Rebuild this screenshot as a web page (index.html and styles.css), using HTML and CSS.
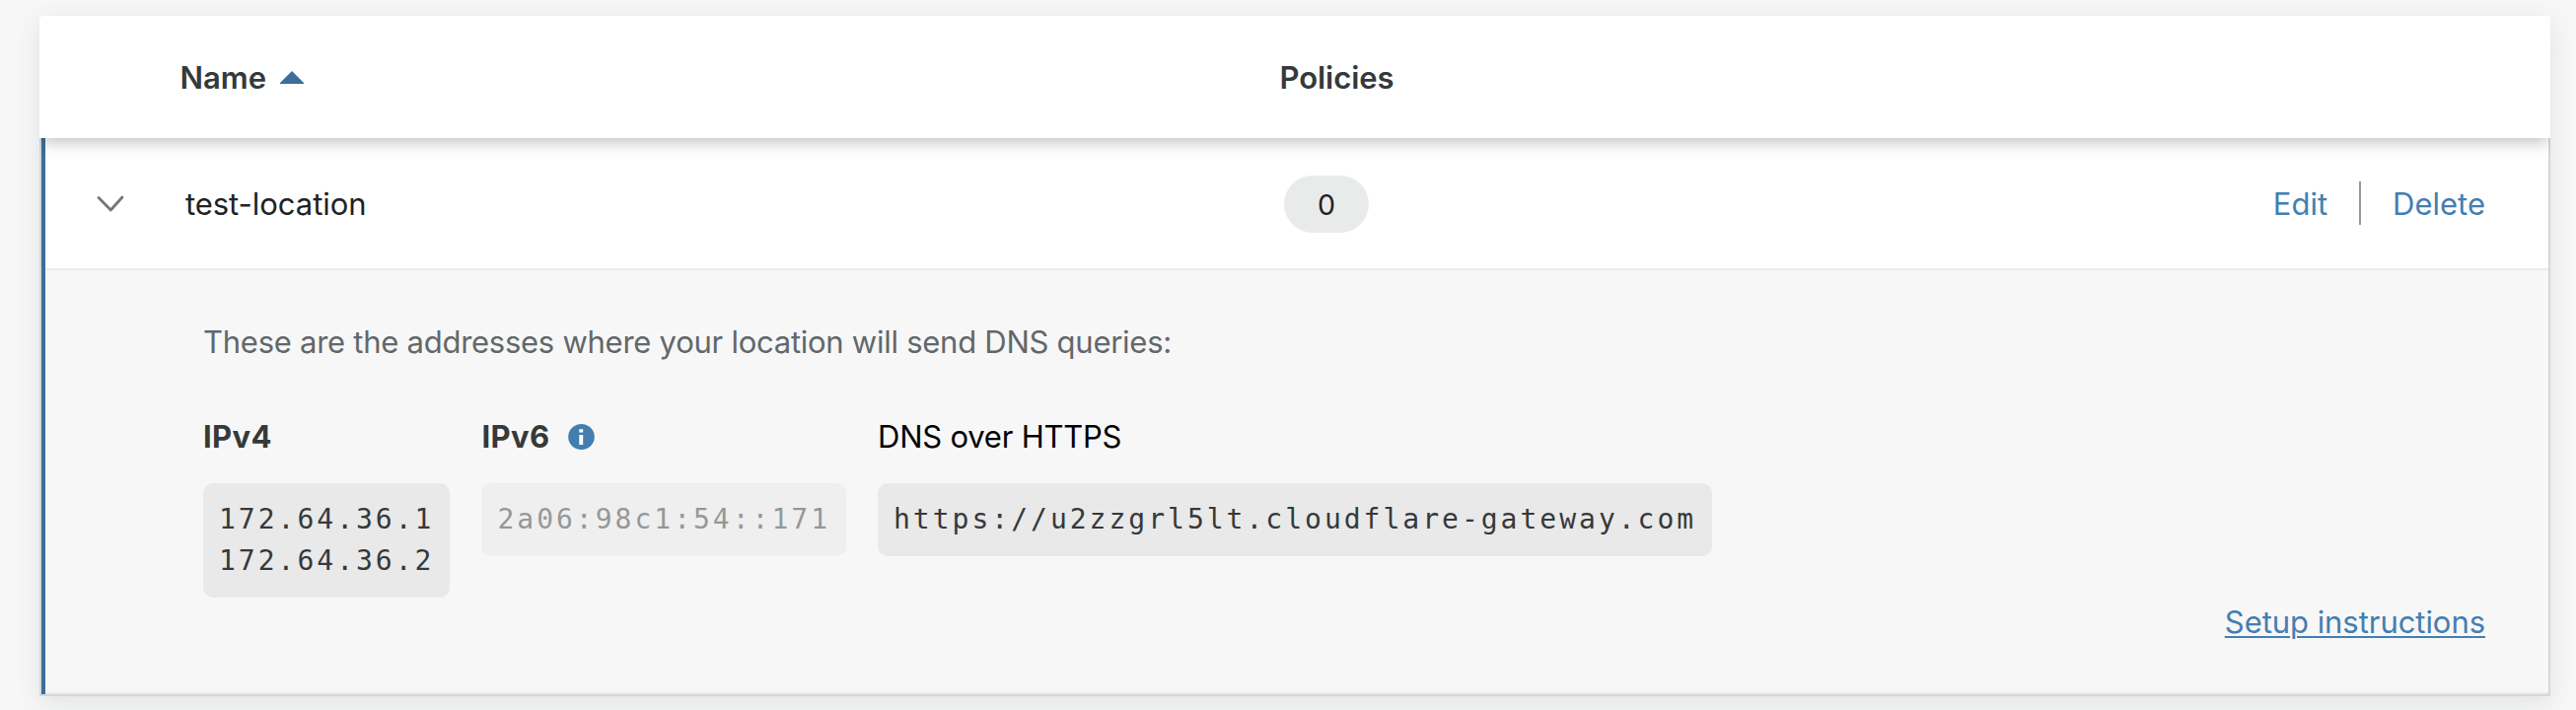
FILE: index.html
```html
<!DOCTYPE html>
<html lang="en">
<head>
<meta charset="utf-8">
<title>Locations</title>
<link rel="stylesheet" href="styles.css">
</head>
<body>
<main class="card">
  <header class="head">
    <div class="col-name head-label"><span class="t-name">Name</span><svg class="sort" width="24" height="13" viewBox="0 0 24 13"><path d="M12 0L24 12V13H0V12Z"/></svg></div>
    <div class="head-label t-policies">Policies</div>
  </header>
  <section class="body">
    <div class="row">
      <svg class="chevron" width="28" height="18" viewBox="0 0 28 18"><path d="M2 2.5L14.3 15L26 2"/></svg>
      <div class="location">test-location</div>
      <div class="badge">0</div>
      <nav class="actions"><a class="t-edit">Edit</a><span class="divider"></span><a class="t-delete">Delete</a></nav>
    </div>
    <div class="details">
      <p class="intro">These are the addresses where your location will send DNS queries:</p>
      <div class="addresses">
        <div class="address">
          <h3 class="label">IPv4</h3>
          <code class="code">172.64.36.1<br>172.64.36.2</code>
        </div>
        <div class="address">
          <h3 class="label">IPv6<svg class="info" width="27" height="26" viewBox="0 0 27 26"><ellipse cx="13.5" cy="13" rx="13.3" ry="13"/><path d="M11.3 5.2h3.9v3.2h-3.9zM11.3 10.9h3.9v10.2h-3.9z"/></svg></h3>
          <code class="code code-muted">2a06:98c1:54::171</code>
        </div>
        <div class="address">
          <h3 class="label label-plain">DNS over HTTPS</h3>
          <code class="code">https://u2zzgrl5lt.cloudflare-gateway.com</code>
        </div>
      </div>
      <a class="setup">Setup instructions</a>
    </div>
  </section>
</main>
</body>
</html>
```
FILE: styles.css
```css
* { box-sizing: border-box; }
body {
  margin: 0;
  padding: 16px 26px 14px 40px;
  height: 720px;
  overflow: hidden;
  background: #f7f7f7;
  font-family: Inter, "Liberation Sans", sans-serif;
  font-size: 31px;
  line-height: 48px;
  color: #222;
}
.card {
  height: 690px;
  border-radius: 4px 4px 0 0;
  box-shadow: 0 6px 26px rgba(60, 75, 80, 0.12);
}
.head {
  position: relative;
  display: grid;
  grid-template-columns: 1115px 1fr;
  align-items: center;
  height: 124px;
  padding: 2px 0 0 142.5px;
  background: #fff;
  border-radius: 4px 4px 0 0;
  box-shadow: 0 6px 16px -2px rgba(0, 0, 0, 0.25);
  clip-path: inset(0 0 -30px 0);
}
.head-label { font-weight: 600; color: #36393a; }
.col-name { display: flex; align-items: center; gap: 14px; }
.t-name { letter-spacing: 0; }
.t-policies { letter-spacing: -0.05px; }
.sort { margin-bottom: 2px; fill: #3b6e9a; }
.body {
  height: 566px;
  border: 2px solid #d5d7d8;
  border-top: 0;
  background: linear-gradient(#3b6e9a, #3b6e9a) left / 4px 100% no-repeat;
  padding-left: 4px;
}
.row {
  display: flex;
  align-items: center;
  height: 134px;
  padding: 2px 64px 0 52px;
  background: #fff;
  border-bottom: 2px solid #ebebeb;
}
.chevron { fill: none; stroke: #72777b; stroke-width: 2.8; stroke-linecap: round; stroke-linejoin: round; }
.location { width: 1114px; margin-left: 62px; letter-spacing: -0.05px; }
.badge {
  width: 86px;
  height: 58px;
  border-radius: 29px;
  background: #e9ebea;
  text-align: center;
  font-size: 28.5px;
  line-height: 60px;
}
.actions { display: flex; align-items: center; margin-left: auto; color: #447eb0; }
.divider { width: 2px; height: 44px; margin: 0 32px 2px; background: #92979b; }
.details {
  display: flex;
  flex-direction: column;
  height: 430px;
  padding: 49px 64px 0 160px;
  background: #f7f7f7;
  border-bottom: 2px solid #ebebeb;
}
.intro { margin: 0; color: #62676a; letter-spacing: -0.26px; }
.addresses { display: flex; gap: 32px; height: 188px; margin-top: 48px; }
.label { display: flex; align-items: center; height: 48px; margin: 0 0 23px; font-size: 31px; font-weight: 700; letter-spacing: 0.4px; color: #36393a; white-space: nowrap; }
.label-plain { font-weight: 400; letter-spacing: -0.22px; color: #000; }
.info { margin-left: 18px; fill: #447eb0; }
.info path { fill: #fff; }
.code {
  display: block;
  padding: 16px;
  border-radius: 10px;
  background: #e9e9e9;
  color: #36393a;
  font-family: "DejaVu Sans Mono", monospace;
  font-size: 28px;
  line-height: 42px;
  letter-spacing: 3px;
  white-space: nowrap;
}
.code-muted { opacity: 0.5; }
.setup {
  align-self: flex-end;
  margin-top: 0;
  color: #447eb0;
  letter-spacing: -0.05px;
  text-decoration: underline;
  text-decoration-thickness: 2px;
  text-underline-offset: 3px;
}
```
